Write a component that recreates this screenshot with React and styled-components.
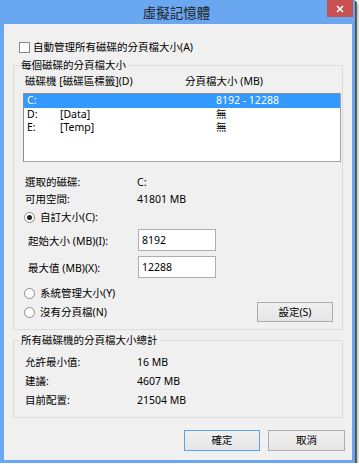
import React from 'react';
import styled, { createGlobalStyle } from 'styled-components';

const Global = createGlobalStyle`
  html, body { margin: 0; padding: 0; background: #fff; }
  body {
    font-family: "Noto Sans", "Noto Sans CJK TC", sans-serif;
    font-size: 10.5px;
    color: #000;
  }
  * { box-sizing: border-box; }
`;

const Window = styled.div`
  width: 355px;
  height: 463px;
  background: #6aa7f1;
  display: flex;
  flex-direction: column;
  padding-bottom: 3px;
  box-shadow: 1px 1px 0 #4a4a4a, 2px 2px 0 #6a6a6a, 3px 3px 3px rgba(0, 0, 0, 0.35);
`;

const TitleBar = styled.div`
  height: 24px;
  flex: none;
  display: grid;
  grid-template-columns: 1fr auto 1fr;
  align-items: start;
  padding-right: 2px;
`;

const Title = styled.div`
  grid-column: 2;
  font-family: "Noto Sans CJK TC", sans-serif;
  font-size: 13.5px;
  line-height: 24px;
  color: #222;
`;

const Close = styled.div`
  grid-column: 3;
  justify-self: end;
  width: 26px;
  height: 17px;
  background: #c75050;
  display: flex;
  align-items: center;
  justify-content: center;
`;

const Client = styled.div`
  flex: 1;
  margin: 0 3px 0 4px;
  background: #f0f0f0;
  padding: 16px 9px 9px 9px;
  display: flex;
  flex-direction: column;
`;

const CheckRow = styled.div`
  display: flex;
  align-items: center;
  gap: 3px;
  padding-left: 6px;
  height: 14px;
  line-height: 14px;
`;

const CheckBox = styled.span`
  width: 11px;
  height: 11px;
  border: 1px solid #8a8a8a;
  background: #fff;
  flex: none;
`;

const Group = styled.fieldset`
  margin: ${p => p.$mt}px 0 0 0;
  padding: 0 0 ${p => p.$pb}px 0;
  border: 1px solid #dcdcdc;
  min-width: 0;
`;

const Legend = styled.legend`
  margin-left: 5px;
  padding: 0 2px;
  line-height: 14px;
  font-size: 10.5px;
`;

const HeaderRow = styled.div`
  margin-top: 2px;
  padding-left: 11px;
  display: grid;
  grid-template-columns: 160px 1fr;
  line-height: 14px;
`;

const ListBox = styled.div`
  margin: 5px 1px 0 9px;
  height: 69px;
  background: #fff;
  border: 1px solid #a3a3a3;
  border-top-color: #8e8f94;
  border-left-color: #8e8f94;
  padding-top: 0;
`;

const ListRow = styled.div`
  display: grid;
  grid-template-columns: 33px 156px 1fr;
  height: 13.5px;
  line-height: 13.5px;
  padding-left: 3px;
  background: ${p => (p.$selected ? '#3399ff' : 'transparent')};
  color: ${p => (p.$selected ? '#fff' : '#000')};
`;

const InfoGrid = styled.div`
  margin-top: ${p => p.$mt}px;
  padding-left: 11px;
  display: grid;
  grid-template-columns: 112px 1fr;
  row-gap: ${p => p.$gap}px;
  line-height: 14px;
`;

const RadioRow = styled.div`
  margin-top: ${p => p.$mt}px;
  padding-left: 10px;
  display: flex;
  align-items: center;
  gap: 5px;
  height: 14px;
  line-height: 14px;
`;

const Radio = styled.span`
  width: 11px;
  height: 11px;
  border-radius: 50%;
  border: 1px solid #8a8a8a;
  background: #fff;
  flex: none;
  display: flex;
  align-items: center;
  justify-content: center;
  &::after {
    content: '';
    width: 5px;
    height: 5px;
    border-radius: 50%;
    background: ${p => (p.$checked ? '#222' : 'transparent')};
  }
`;

const SizeRow = styled.div`
  margin-top: 5px;
  padding-left: 14px;
  display: grid;
  grid-template-columns: 110px 78px;
  align-items: center;
  height: 22px;
`;

const TextInput = styled.input`
  width: 78px;
  height: 22px;
  border: 1px solid #abadb3;
  background: #fff;
  padding: 0 3px;
  font: inherit;
  font-size: 10.5px;
  color: #000;
  outline: none;
`;

const BottomRow = styled.div`
  margin-top: 2px;
  display: flex;
  align-items: center;
  justify-content: space-between;
  height: 20px;
  padding-right: 9px;
`;

const Button = styled.button`
  width: ${p => p.$w}px;
  height: ${p => p.$h}px;
  border: 1px solid ${p => (p.$default ? '#5aa3ec' : '#acacac')};
  background: linear-gradient(#f0f0f0, #e5e5e5);
  font: inherit;
  font-size: 10.5px;
  color: #000;
  padding: 0;
  line-height: 1;
`;

const Footer = styled.div`
  margin: 12px -2px 0 0;
  display: flex;
  justify-content: flex-end;
  gap: 8px;
`;

export default function App() {
  return (
    <>
      <Global />
      <Window>
        <TitleBar>
          <Title>虛擬記憶體</Title>
          <Close>
            <svg width="8" height="8" viewBox="0 0 8 8">
              <path d="M1 1L7 7M7 1L1 7" stroke="#fff" strokeWidth="1.6" />
            </svg>
          </Close>
        </TitleBar>
        <Client>
          <CheckRow>
            <CheckBox />
            <span>自動管理所有磁碟的分頁檔大小(A)</span>
          </CheckRow>

          <Group $mt={4} $pb={7}>
            <Legend>每個磁碟的分頁檔大小</Legend>
            <HeaderRow>
              <span>磁碟機 [磁碟區標籤](D)</span>
              <span>分頁檔大小 (MB)</span>
            </HeaderRow>
            <ListBox>
              <ListRow $selected>
                <span>C:</span>
                <span></span>
                <span>8192 - 12288</span>
              </ListRow>
              <ListRow>
                <span>D:</span>
                <span>[Data]</span>
                <span>無</span>
              </ListRow>
              <ListRow>
                <span>E:</span>
                <span>[Temp]</span>
                <span>無</span>
              </ListRow>
            </ListBox>

            <InfoGrid $mt={13} $gap={3}>
              <span>選取的磁碟:</span>
              <span>C:</span>
              <span>可用空間:</span>
              <span>41801 MB</span>
            </InfoGrid>

            <RadioRow $mt={4}>
              <Radio $checked />
              <span>自訂大小(C):</span>
            </RadioRow>
            <SizeRow>
              <span>起始大小 (MB)(I):</span>
              <TextInput readOnly value="8192" />
            </SizeRow>
            <SizeRow>
              <span>最大值 (MB)(X):</span>
              <TextInput readOnly value="12288" />
            </SizeRow>
            <RadioRow $mt={8}>
              <Radio />
              <span>系統管理大小(Y)</span>
            </RadioRow>
            <BottomRow>
              <RadioRow $mt={0}>
                <Radio />
                <span>沒有分頁檔(N)</span>
              </RadioRow>
              <Button $w={76} $h={20}>設定(S)</Button>
            </BottomRow>
          </Group>

          <Group $mt={3} $pb={10}>
            <Legend>所有磁碟機的分頁檔大小總計</Legend>
            <InfoGrid $mt={8} $gap={5}>
              <span>允許最小值:</span>
              <span>16 MB</span>
              <span>建議:</span>
              <span>4607 MB</span>
              <span>目前配置:</span>
              <span>21504 MB</span>
            </InfoGrid>
          </Group>

          <Footer>
            <Button $w={76} $h={21} $default>確定</Button>
            <Button $w={77} $h={21}>取消</Button>
          </Footer>
        </Client>
      </Window>
    </>
  );
}
